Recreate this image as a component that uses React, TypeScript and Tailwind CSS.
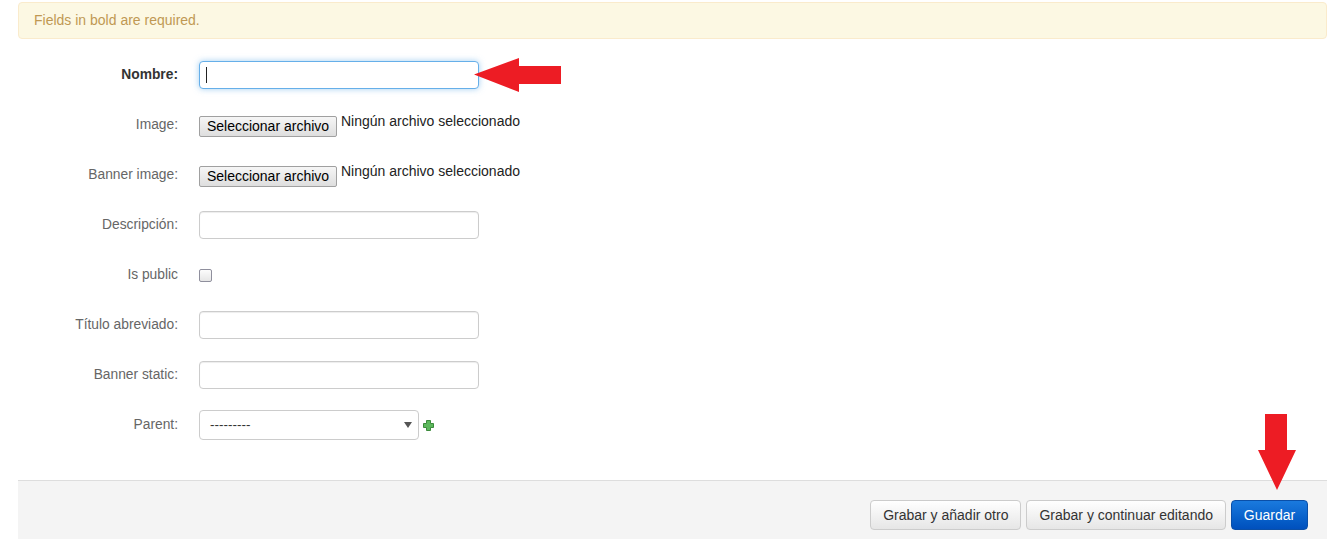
import React from "react";

const font = { fontFamily: '"Liberation Sans", Arial, sans-serif' };

function Row({ label, bold, children }: { label: string; bold?: boolean; children: React.ReactNode }) {
  return (
    <div className="flex h-[50px] items-center">
      <div
        className={`w-[160px] text-right text-[13.8px] ${bold ? "font-bold text-[#333]" : "text-[#666]"}`}
      >
        {label}
      </div>
      <div className="ml-[21px] flex items-center">{children}</div>
    </div>
  );
}

function TextInput({ focused }: { focused?: boolean }) {
  return (
    <div
      className={`relative h-[28px] w-[280px] rounded-[4px] border bg-white ${
        focused
          ? "border-[#66afe9] shadow-[0_0_6px_rgba(102,175,233,0.6)]"
          : "border-[#ccc] shadow-[inset_0_1px_1px_rgba(0,0,0,0.075)]"
      }`}
    >
      {focused && <div className="absolute left-[6px] top-[5px] h-[16px] w-[1px] bg-[#222]" />}
    </div>
  );
}

function FileInput() {
  return (
    <div className="flex items-start text-[14px] text-[#222]">
      <div className="mt-[2px] flex h-[21px] w-[138px] items-center justify-center rounded-[2px] border border-[#a0a0a0] bg-gradient-to-b from-[#f6f6f6] to-[#dedede] text-[14px] text-black">
        Seleccionar archivo
      </div>
      <span className="ml-[4px] -mt-[3px]">Ningún archivo seleccionado</span>
    </div>
  );
}

export default function App() {
  return (
    <div className="relative h-[539px] w-[1340px] overflow-hidden bg-white" style={font}>
      <div className="pl-[18px] pr-[13px] pt-[2px]">
        <div className="flex h-[37px] items-center rounded-[4px] border border-[#faebcc] bg-[#fcf8e3] pl-[15px] text-[14px] text-[#c09853]">
          Fields in bold are required.
        </div>

        <div className="mt-[11px]">
          <Row label="Nombre:" bold>
            <TextInput focused />
          </Row>
          <Row label="Image:">
            <FileInput />
          </Row>
          <Row label="Banner image:">
            <FileInput />
          </Row>
          <Row label="Descripción:">
            <TextInput />
          </Row>
          <Row label="Is public">
            <div className="h-[13px] w-[13px] rounded-[2px] border border-[#8f8f9d] bg-gradient-to-b from-[#fcfcfc] to-[#e6e6e6]" />
          </Row>
          <Row label="Título abreviado:">
            <TextInput />
          </Row>
          <Row label="Banner static:">
            <TextInput />
          </Row>
          <Row label="Parent:">
            <div className="flex h-[30px] w-[220px] items-center justify-between rounded-[4px] border border-[#ccc] bg-white pl-[10px] pr-[6px] text-[13.5px] text-[#333]">
              <span>---------</span>
              <svg width="8" height="6" viewBox="0 0 8 6">
                <polygon points="0,0 8,0 4,6" fill="#555" />
              </svg>
            </div>
            <svg className="ml-[4px]" width="11" height="11" viewBox="0 0 11 11">
              <path
                d="M3.5 0.5 H7.5 V3.5 H10.5 V7.5 H7.5 V10.5 H3.5 V7.5 H0.5 V3.5 H3.5 Z"
                fill="#5cb85c"
                stroke="#3c8b3c"
                strokeWidth="1"
              />
            </svg>
          </Row>
        </div>

        <div className="mt-[30px] flex h-[70px] items-start justify-end border-t border-[#ddd] bg-[#f4f4f4] pr-[19px] pt-[19px]">
          <div className="flex gap-[5px]">
            <button className="h-[30px] rounded-[4px] border border-[#ccc] bg-gradient-to-b from-white to-[#e6e6e6] px-[12px] text-[14px] text-[#333]">
              Grabar y añadir otro
            </button>
            <button className="h-[30px] rounded-[4px] border border-[#ccc] bg-gradient-to-b from-white to-[#e6e6e6] px-[12px] text-[14px] text-[#333]">
              Grabar y continuar editando
            </button>
            <button className="h-[30px] w-[77px] rounded-[4px] border border-[#0a4fa8] bg-gradient-to-b from-[#1a7ade] to-[#0050bd] text-[14px] text-white">
              Guardar
            </button>
          </div>
        </div>
      </div>

      {/* Left-pointing red arrow */}
      <svg className="absolute left-[474px] top-[58px]" width="88" height="35" viewBox="0 0 88 35">
        <polygon points="0,16.5 45,0 45,8 87,8 87,26 45,26 45,34" fill="#ed1c24" />
      </svg>

      {/* Down-pointing red arrow */}
      <svg className="absolute left-[1257px] top-[414px]" width="40" height="77" viewBox="0 0 40 77">
        <polygon points="8,0 30,0 30,36 39,36 20,76 1,36 8,36" fill="#ed1c24" />
      </svg>
    </div>
  );
}
